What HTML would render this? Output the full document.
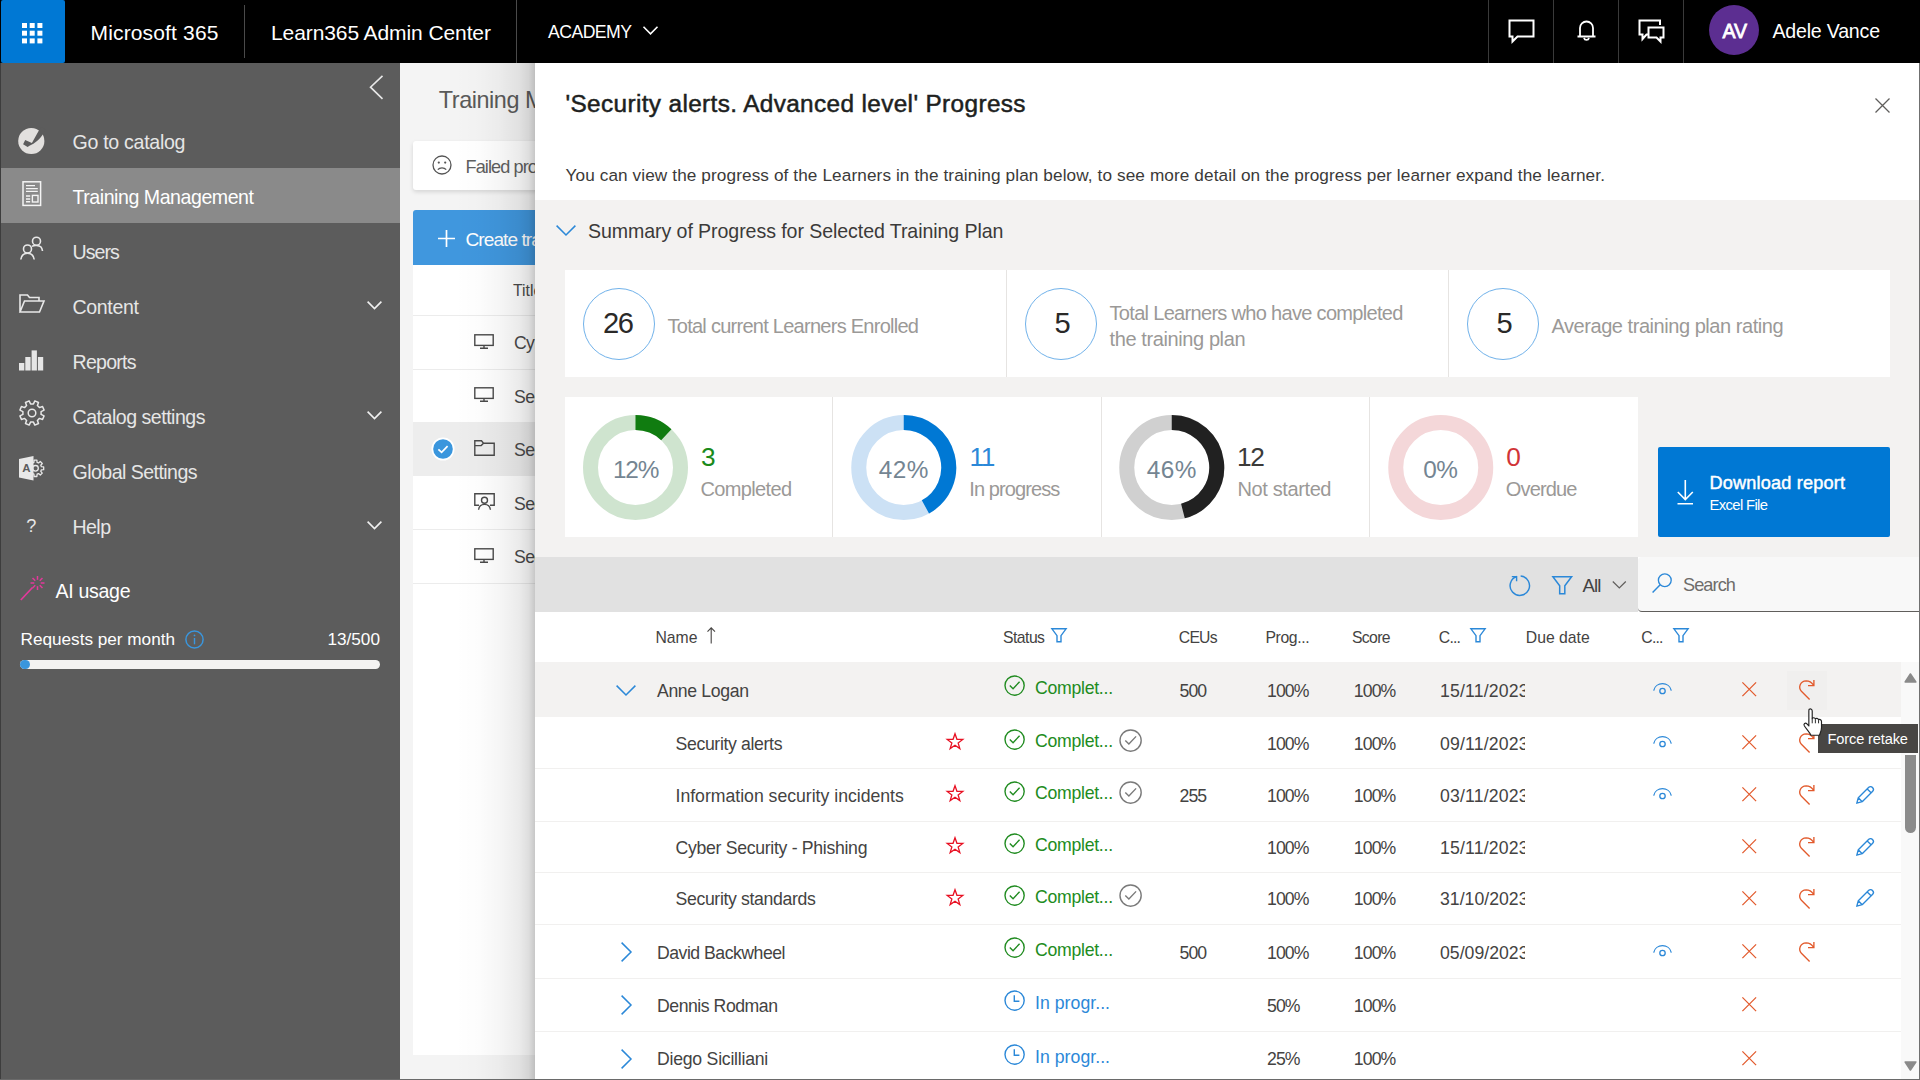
<!DOCTYPE html>
<html lang="en"><head><meta charset="utf-8"><title>Learn365 Admin Center</title>
<style>
*{box-sizing:border-box;margin:0;padding:0}
html,body{width:1920px;height:1080px;overflow:hidden;background:#f4f4f4;font-family:"Liberation Sans",sans-serif;}
.a{position:absolute}
.t{position:absolute;white-space:nowrap;line-height:1;}
svg{overflow:visible}
</style></head>
<body>
<div class="a" style="left:400px;top:63px;width:1520px;height:1017px;background:#f4f4f4;"></div>
<span class="t" style="top:88.54px;font-size:23.4px;color:#5a5a5a;left:438.80px;letter-spacing:-0.425px;">Training Management</span>
<div class="a" style="left:413px;top:141px;width:300px;height:49px;background:#fff;border-radius:3px;box-shadow:0 2px 4px rgba(0,0,0,0.13);"></div>
<svg class="a" style="left:432px;top:155px;" width="20" height="20" viewBox="0 0 20 20" fill="none"><circle cx="10" cy="10" r="9" stroke="#555" stroke-width="1.3"/><circle cx="6.8" cy="7.6" r="1.1" fill="#555"/><circle cx="13.2" cy="7.6" r="1.1" fill="#555"/><path d="M5.8 14.6 C7.8 12.2 12.2 12.2 14.2 14.6" stroke="#555" stroke-width="1.3"/></svg>
<span class="t" style="top:157.99px;font-size:18.14px;color:#5f5f5f;left:465.50px;letter-spacing:-0.907px;">Failed processes</span>
<div class="a" style="left:413px;top:262px;width:1200px;height:793px;background:#fff;"></div>
<div class="a" style="left:413px;top:210px;width:300px;height:54.6px;background:#4097de;border-radius:3px 3px 0 0;"></div>
<svg class="a" style="left:438px;top:230px;" width="17" height="17" viewBox="0 0 17 17" fill="none"><path d="M8.5 0 V17 M0 8.5 H17" stroke="#fff" stroke-width="1.7"/></svg>
<span class="t" style="top:230.18px;font-size:19.1px;color:#fff;left:465.50px;letter-spacing:-0.955px;">Create training</span>
<span class="t" style="top:282.51px;font-size:15.76px;color:#4a4a4a;left:513.00px;">Title</span>
<div class="a" style="left:413px;top:315px;width:1200px;height:1px;background:#ececec;"></div>
<div class="a" style="left:413px;top:369px;width:1200px;height:1px;background:#ececec;"></div>
<div class="a" style="left:413px;top:529px;width:1200px;height:1px;background:#ececec;"></div>
<div class="a" style="left:413px;top:583px;width:1200px;height:1px;background:#ececec;"></div>
<div class="a" style="left:413px;top:422px;width:1200px;height:54px;background:#ededed;"></div>
<span class="t" style="top:335.39px;font-size:17.67px;color:#4a4a4a;left:514.00px;letter-spacing:-0.664px;">Cyber Security</span>
<span class="t" style="top:388.89px;font-size:17.67px;color:#4a4a4a;left:514.00px;letter-spacing:-0.595px;">Security alerts</span>
<span class="t" style="top:442.39px;font-size:17.67px;color:#4a4a4a;left:514.00px;letter-spacing:-0.597px;">Security alerts. Advanced level</span>
<span class="t" style="top:495.89px;font-size:17.67px;color:#4a4a4a;left:514.00px;letter-spacing:-0.631px;">Security basics</span>
<span class="t" style="top:549.39px;font-size:17.67px;color:#4a4a4a;left:514.00px;letter-spacing:-0.640px;">Security standards</span>
<svg class="a" style="left:473.7px;top:333.5px;" width="20" height="15" viewBox="0 0 20 15" fill="none"><rect x="0.8" y="0.8" width="18.4" height="10.6" stroke="#4a4a4a" stroke-width="1.4"/><path d="M10 11.5 V14 M6 14.2 H14" stroke="#4a4a4a" stroke-width="1.4"/></svg>
<svg class="a" style="left:473.7px;top:387px;" width="20" height="15" viewBox="0 0 20 15" fill="none"><rect x="0.8" y="0.8" width="18.4" height="10.6" stroke="#4a4a4a" stroke-width="1.4"/><path d="M10 11.5 V14 M6 14.2 H14" stroke="#4a4a4a" stroke-width="1.4"/></svg>
<svg class="a" style="left:473.7px;top:547.5px;" width="20" height="15" viewBox="0 0 20 15" fill="none"><rect x="0.8" y="0.8" width="18.4" height="10.6" stroke="#4a4a4a" stroke-width="1.4"/><path d="M10 11.5 V14 M6 14.2 H14" stroke="#4a4a4a" stroke-width="1.4"/></svg>
<svg class="a" style="left:473.7px;top:440px;" width="21" height="16" viewBox="0 0 21 16" fill="none"><path d="M0.8 15.2 V0.8 H7.5 L9.5 3.2 H20.2 V15.2 Z M0.8 5.6 H7.2 L9.5 3.2" stroke="#4a4a4a" stroke-width="1.4" stroke-linejoin="miter"/></svg>
<svg class="a" style="left:473.7px;top:493px;" width="21" height="17" viewBox="0 0 21 17" fill="none"><path d="M5 12.2 H0.8 V0.8 H20.2 V12.2 H16" stroke="#4a4a4a" stroke-width="1.4"/><circle cx="10.5" cy="7.2" r="3" stroke="#4a4a4a" stroke-width="1.4"/><path d="M4.6 16.8 C5 12.6 7.8 11.4 10.5 11.4 C13.2 11.4 16 12.6 16.4 16.8" stroke="#4a4a4a" stroke-width="1.4"/></svg>
<svg class="a" style="left:431px;top:437px;" width="24" height="24" viewBox="0 0 24 24" fill="none"><circle cx="12" cy="12" r="11.5" fill="#fff"/><circle cx="12" cy="12" r="9.8" fill="#3a96dd"/><path d="M7.4 12.4 L10.6 15.4 L16.6 9.2" stroke="#fff" stroke-width="1.7"/></svg>
<div class="a" style="left:455px;top:63px;width:80px;height:1017px;background:linear-gradient(to right,rgba(0,0,0,0) 0%,rgba(0,0,0,0.012) 30%,rgba(0,0,0,0.035) 55%,rgba(0,0,0,0.08) 80%,rgba(0,0,0,0.13) 92%,rgba(0,0,0,0.22) 100%);"></div>
<div class="a" style="left:0px;top:63px;width:400px;height:1017px;background:#5c5c5c;"></div>
<div class="a" style="left:0px;top:63px;width:1px;height:1017px;background:#3d3d3d;"></div>
<svg class="a" style="left:369px;top:75px;" width="15" height="25" viewBox="0 0 15 25" fill="none"><path d="M13.5 0.8 L1.5 12.2 L13.5 23.8" stroke="#e8e8e8" stroke-width="1.6"/></svg>
<div class="a" style="left:1px;top:168px;width:399px;height:55px;background:#8a8a8a;"></div>
<span class="t" style="top:133.28px;font-size:19.58px;color:#e6e6e6;left:72.50px;letter-spacing:-0.292px;">Go to catalog</span>
<span class="t" style="top:188.28px;font-size:19.58px;color:#fff;left:72.50px;letter-spacing:-0.457px;">Training Management</span>
<span class="t" style="top:243.28px;font-size:19.58px;color:#e6e6e6;left:72.50px;letter-spacing:-0.979px;">Users</span>
<span class="t" style="top:298.28px;font-size:19.58px;color:#e6e6e6;left:72.50px;letter-spacing:-0.355px;">Content</span>
<span class="t" style="top:353.28px;font-size:19.58px;color:#e6e6e6;left:72.50px;letter-spacing:-0.755px;">Reports</span>
<span class="t" style="top:408.28px;font-size:19.58px;color:#e6e6e6;left:72.50px;letter-spacing:-0.492px;">Catalog settings</span>
<span class="t" style="top:463.28px;font-size:19.58px;color:#e6e6e6;left:72.50px;letter-spacing:-0.553px;">Global Settings</span>
<span class="t" style="top:518.28px;font-size:19.58px;color:#e6e6e6;left:72.50px;letter-spacing:-0.577px;">Help</span>
<svg class="a" style="left:367px;top:301.0px;" width="15" height="9" viewBox="0 0 15 9" fill="none"><path d="M0.6 0.6 L7.5 7.6 L14.4 0.6" stroke="#f0f0f0" stroke-width="1.6"/></svg>
<svg class="a" style="left:367px;top:411.0px;" width="15" height="9" viewBox="0 0 15 9" fill="none"><path d="M0.6 0.6 L7.5 7.6 L14.4 0.6" stroke="#f0f0f0" stroke-width="1.6"/></svg>
<svg class="a" style="left:367px;top:521.0px;" width="15" height="9" viewBox="0 0 15 9" fill="none"><path d="M0.6 0.6 L7.5 7.6 L14.4 0.6" stroke="#f0f0f0" stroke-width="1.6"/></svg>
<svg class="a" style="left:18px;top:128px;" width="27" height="27" viewBox="0 0 27 27" fill="none"><circle cx="13.3" cy="13" r="13.1" fill="#e2e0de"/><path d="M7.2 12 L5.1 16.3 L9.6 18.9 C14.5 16.3 20.5 13.5 24.6 6.8 L28 2 L22.8 -1 L13.9 15 Z" fill="#5c5c5c"/></svg>
<svg class="a" style="left:21.5px;top:181px;" width="20" height="25" viewBox="0 0 20 25" fill="none"><rect x="1" y="0.8" width="17.6" height="23.6" stroke="#f4f4f4" stroke-width="1.5"/><path d="M4 4.6 H13 M4 7.6 H15.8 M4 10.4 H15.8 M4 15 H8.2 M4 18 H8.2 M4 20.8 H8.2" stroke="#f4f4f4" stroke-width="1.4"/><rect x="10.4" y="14.4" width="5.6" height="6.6" stroke="#f4f4f4" stroke-width="1.4"/></svg>
<svg class="a" style="left:20px;top:236px;" width="23" height="24" viewBox="0 0 23 24" fill="none"><circle cx="16.5" cy="5.2" r="4" stroke="#e8e8e8" stroke-width="1.6"/><circle cx="7.5" cy="13" r="4" stroke="#e8e8e8" stroke-width="1.6"/><path d="M0.8 23.5 C1.5 18.5 4 17.2 7.5 17.2 C11 17.2 13.5 18.5 14.2 23.5" stroke="#e8e8e8" stroke-width="1.6"/><path d="M12 10.2 C14 9.2 19 9 21 11 C22 12.2 22.3 13.5 22.5 15" stroke="#e8e8e8" stroke-width="1.6"/></svg>
<svg class="a" style="left:18.5px;top:294px;" width="26" height="19" viewBox="0 0 26 19" fill="none"><path d="M1 18 V1 H8.5 L10.5 3.5 H20 V7 M1 18 L5.5 7 H25 L20.5 18 Z" stroke="#e8e8e8" stroke-width="1.6" stroke-linejoin="miter"/></svg>
<svg class="a" style="left:18.6px;top:350px;" width="25" height="21" viewBox="0 0 25 21" fill="none"><rect x="0" y="13" width="5.3" height="7.5" fill="#e6e6e6"/><rect x="6.3" y="7" width="5.3" height="13.5" fill="#e6e6e6"/><rect x="12.6" y="0.4" width="5.3" height="20.1" fill="#e6e6e6"/><rect x="18.9" y="7" width="5.3" height="13.5" fill="#e6e6e6"/></svg>
<svg class="a" style="left:18.5px;top:400.2px;" width="26" height="26" viewBox="0 0 26 26" fill="none"><path d="M15.86 0.93 L19.51 2.45 L18.40 5.55 L20.44 7.59 L23.55 6.49 L25.07 10.14 L22.09 11.56 L22.09 14.44 L25.07 15.86 L23.55 19.51 L20.45 18.40 L18.41 20.44 L19.51 23.55 L15.86 25.07 L14.44 22.09 L11.56 22.09 L10.14 25.07 L6.49 23.55 L7.60 20.45 L5.56 18.41 L2.45 19.51 L0.93 15.86 L3.91 14.44 L3.91 11.56 L0.93 10.14 L2.45 6.49 L5.55 7.60 L7.59 5.56 L6.49 2.45 L10.14 0.93 L11.56 3.91 L14.44 3.91 Z" stroke="#e8e8e8" stroke-width="1.5" stroke-linejoin="round"/><circle cx="13" cy="13" r="3.8" stroke="#e8e8e8" stroke-width="1.5"/></svg>
<svg class="a" style="left:19px;top:456px;" width="26" height="25" viewBox="0 0 26 25" fill="none"><path d="M15.10 4.12 L17.90 4.12 L18.07 6.41 L19.53 7.01 L21.29 5.52 L23.28 7.51 L21.78 9.24 L22.39 10.70 L24.68 10.90 L24.68 13.70 L22.39 13.87 L21.79 15.33 L23.28 17.09 L21.29 19.08 L19.56 17.58 L18.10 18.19 L17.90 20.48 L15.10 20.48 L14.93 18.19 L13.47 17.59 L11.71 19.08 L9.72 17.09 L11.22 15.36 L10.61 13.90 L8.32 13.70 L8.32 10.90 L10.61 10.73 L11.21 9.27 L9.72 7.51 L11.71 5.52 L13.44 7.02 L14.90 6.41 Z" stroke="#e8e8e8" stroke-width="1.3" stroke-linejoin="round"/><circle cx="16.5" cy="12.3" r="2.8" stroke="#e8e8e8" stroke-width="1.3"/><path d="M0 3 L14.5 0 V24.5 L0 21.5 Z" fill="#e8e8e8"/><text x="3.2" y="16.3" font-family="Liberation Sans, sans-serif" font-weight="bold" font-size="11.5" fill="#5c5c5c">A</text></svg>
<span class="t" style="top:517.49px;font-size:18.14px;color:#e8e8e8;left:26.20px;">?</span>
<svg class="a" style="left:20px;top:576px;" width="26" height="25" viewBox="0 0 26 25" fill="none"><path d="M0.8 24 L12.5 11.5" stroke="#e3399b" stroke-width="1.7"/><path d="M20.70 7.00 L24.50 7.00" stroke="#e3399b" stroke-width="1.5"/><path d="M19.76 9.26 L22.45 11.95" stroke="#e3399b" stroke-width="1.5"/><path d="M17.50 10.20 L17.50 14.00" stroke="#e3399b" stroke-width="1.5"/><path d="M15.24 9.26 L12.55 11.95" stroke="#e3399b" stroke-width="1.5"/><path d="M14.30 7.00 L10.50 7.00" stroke="#e3399b" stroke-width="1.5"/><path d="M15.24 4.74 L12.55 2.05" stroke="#e3399b" stroke-width="1.5"/><path d="M17.50 3.80 L17.50 0.00" stroke="#e3399b" stroke-width="1.5"/><path d="M19.76 4.74 L22.45 2.05" stroke="#e3399b" stroke-width="1.5"/></svg>
<span class="t" style="top:582.28px;font-size:19.58px;color:#fff;left:55.50px;letter-spacing:-0.319px;">AI usage</span>
<span class="t" style="top:631.30px;font-size:17.19px;color:#fff;left:20.50px;letter-spacing:-0.016px;">Requests per month</span>
<svg class="a" style="left:185px;top:630px;" width="19" height="19" viewBox="0 0 19 19" fill="none"><circle cx="9.5" cy="9.5" r="8.6" stroke="#3a96dd" stroke-width="1.5"/><path d="M9.5 8 V14.3" stroke="#3a96dd" stroke-width="1.4"/><circle cx="9.5" cy="5.4" r="0.9" fill="#3a96dd"/></svg>
<span class="t" style="top:631.30px;font-size:17.19px;color:#fff;left:327.50px;letter-spacing:-0.020px;">13/500</span>
<div class="a" style="left:20px;top:660px;width:360px;height:9px;background:#f3f2f1;border-radius:5px;"></div>
<div class="a" style="left:20px;top:660px;width:9.5px;height:9px;background:#3a96dd;border-radius:5px;"></div>
<div class="a" style="left:535px;top:63px;width:1385px;height:1017px;background:#fff;"></div>
<span class="t" style="top:92.04px;font-size:24.35px;color:#201f1e;left:565.50px;-webkit-text-stroke:0.5px #201f1e;letter-spacing:0.366px;">'Security alerts. Advanced level' Progress</span>
<svg class="a" style="left:1875px;top:98px;" width="15" height="15" viewBox="0 0 15 15" fill="none"><path d="M0.5 0.5 L14.5 14.5 M14.5 0.5 L0.5 14.5" stroke="#605e5c" stroke-width="1.3"/></svg>
<span class="t" style="top:167.10px;font-size:17.19px;color:#3b3a39;left:565.50px;letter-spacing:0.103px;">You can view the progress of the Learners in the training plan below, to see more detail on the progress per learner expand the learner.</span>
<div class="a" style="left:535px;top:200px;width:1385px;height:357px;background:#f3f2f1;"></div>
<svg class="a" style="left:555.5px;top:225px;" width="20" height="11" viewBox="0 0 20 11" fill="none"><path d="M0.6 0.6 L10 10 L19.4 0.6" stroke="#2b88d8" stroke-width="1.5"/></svg>
<span class="t" style="top:222.28px;font-size:19.58px;color:#3b3a39;left:588.00px;letter-spacing:-0.077px;">Summary of Progress for Selected Training Plan</span>
<div class="a" style="left:565px;top:270px;width:1325px;height:107px;background:#fff;"></div>
<div class="a" style="left:1006px;top:270px;width:1px;height:107px;background:#e6e4e2;"></div>
<div class="a" style="left:1448px;top:270px;width:1px;height:107px;background:#e6e4e2;"></div>
<div class="a" style="left:583px;top:288px;width:72px;height:72px;border:1.3px solid #71b2ea;border-radius:50%;"></div>
<span class="t" style="top:308.69px;font-size:29.13px;color:#2a2928;left:603.00px;letter-spacing:-1.457px;">26</span>
<div class="a" style="left:1025px;top:288px;width:72px;height:72px;border:1.3px solid #71b2ea;border-radius:50%;"></div>
<span class="t" style="top:308.69px;font-size:29.13px;color:#2a2928;left:1054.50px;">5</span>
<div class="a" style="left:1467px;top:288px;width:72px;height:72px;border:1.3px solid #71b2ea;border-radius:50%;"></div>
<span class="t" style="top:308.69px;font-size:29.13px;color:#2a2928;left:1496.50px;">5</span>
<span class="t" style="top:316.38px;font-size:20.05px;color:#9b9997;left:667.50px;letter-spacing:-0.747px;">Total current Learners Enrolled</span>
<span class="t" style="top:303.18px;font-size:20.05px;color:#9b9997;left:1109.50px;letter-spacing:-0.697px;">Total Learners who have completed</span>
<span class="t" style="top:329.18px;font-size:20.05px;color:#9b9997;left:1109.50px;letter-spacing:-0.407px;">the training plan</span>
<span class="t" style="top:316.38px;font-size:20.05px;color:#9b9997;left:1551.50px;letter-spacing:-0.466px;">Average training plan rating</span>
<div class="a" style="left:565px;top:397px;width:1073px;height:140px;background:#fff;"></div>
<div class="a" style="left:832px;top:397px;width:1px;height:140px;background:#e6e4e2;"></div>
<div class="a" style="left:1101px;top:397px;width:1px;height:140px;background:#e6e4e2;"></div>
<div class="a" style="left:1369px;top:397px;width:1px;height:140px;background:#e6e4e2;"></div>
<svg class="a" style="left:0;top:0" width="1920" height="1080" fill="none"><circle cx="635.5" cy="467.5" r="45" stroke="#cfe4cf" stroke-width="15"/><path d="M635.5 422.5 A45 45 0 0 1 666.30 434.70" stroke="#107c10" stroke-width="15"/></svg>
<span class="t" style="top:457.84px;font-size:24.35px;color:#748592;left:613.00px;letter-spacing:-1.218px;">12%</span>
<span class="t" style="top:444.12px;font-size:26.26px;color:#1a8a1a;left:701.00px;">3</span>
<span class="t" style="top:478.88px;font-size:20.05px;color:#9b9997;left:700.50px;letter-spacing:-0.669px;">Completed</span>
<svg class="a" style="left:0;top:0" width="1920" height="1080" fill="none"><circle cx="903.75" cy="467.5" r="45" stroke="#cce1f5" stroke-width="15"/><path d="M903.75 422.5 A45 45 0 0 1 925.43 506.93" stroke="#0078d4" stroke-width="15"/></svg>
<span class="t" style="top:457.84px;font-size:24.35px;color:#748592;left:878.75px;letter-spacing:0.401px;">42%</span>
<span class="t" style="top:444.12px;font-size:26.26px;color:#2b88d8;left:969.50px;letter-spacing:-1.313px;">11</span>
<span class="t" style="top:478.88px;font-size:20.05px;color:#9b9997;left:969.30px;letter-spacing:-0.927px;">In progress</span>
<svg class="a" style="left:0;top:0" width="1920" height="1080" fill="none"><circle cx="1171.75" cy="467.5" r="45" stroke="#d0d0d0" stroke-width="15"/><path d="M1171.75 422.5 A45 45 0 0 1 1182.94 511.09" stroke="#212121" stroke-width="15"/></svg>
<span class="t" style="top:457.84px;font-size:24.35px;color:#748592;left:1146.75px;letter-spacing:0.401px;">46%</span>
<span class="t" style="top:444.12px;font-size:26.26px;color:#3b3a39;left:1237.00px;letter-spacing:-1.313px;">12</span>
<span class="t" style="top:478.88px;font-size:20.05px;color:#9b9997;left:1237.50px;letter-spacing:-0.396px;">Not started</span>
<svg class="a" style="left:0;top:0" width="1920" height="1080" fill="none"><circle cx="1440.75" cy="467.5" r="45" stroke="#f4d7d9" stroke-width="15"/></svg>
<span class="t" style="top:457.84px;font-size:24.35px;color:#748592;left:1423.25px;letter-spacing:-0.480px;">0%</span>
<span class="t" style="top:444.12px;font-size:26.26px;color:#d13438;left:1506.30px;">0</span>
<span class="t" style="top:478.88px;font-size:20.05px;color:#9b9997;left:1505.80px;letter-spacing:-0.855px;">Overdue</span>
<div class="a" style="left:1658px;top:447px;width:232px;height:90px;background:#0078d4;border-radius:2px;"></div>
<svg class="a" style="left:1677px;top:480px;" width="17" height="25" viewBox="0 0 17 25" fill="none"><path d="M8.3 0 V19.5 M0.8 12 L8.3 19.5 L15.8 12 M0.5 23.8 H16" stroke="#fff" stroke-width="1.6"/></svg>
<span class="t" style="top:474.29px;font-size:18.14px;color:#fff;left:1709.50px;-webkit-text-stroke:0.45px #fff;letter-spacing:0.176px;">Download report</span>
<span class="t" style="top:498.32px;font-size:14.8px;color:#fff;left:1709.50px;letter-spacing:-0.627px;">Excel File</span>
<div class="a" style="left:535px;top:557px;width:1103px;height:54.5px;background:#e1e1e1;"></div>
<div class="a" style="left:1638px;top:557px;width:281px;height:54.5px;background:#f8f8f8;border-bottom:1.3px solid #605e5c;border-radius:4px 0 0 4px;"></div>
<svg class="a" style="left:1509px;top:574.5px;" width="21" height="21" viewBox="0 0 21 21" fill="none"><path d="M11.65 1.04 A9.7 9.7 0 1 1 7.64 1.53" stroke="#2b88d8" stroke-width="1.45"/><path d="M2.8 1.6 H7.6 V6.2" stroke="#2b88d8" stroke-width="1.4"/></svg>
<svg class="a" style="left:1552px;top:576px;" width="20.5" height="18.5" viewBox="0 0 20.5 18.5" fill="none"><path d="M0.9 0.8 H19.60 L12.81 9.80 V17.80 H7.69 V9.80 Z" stroke="#2b88d8" stroke-width="1.5" stroke-linejoin="miter"/></svg>
<span class="t" style="top:576.89px;font-size:18.62px;color:#444342;left:1582.50px;letter-spacing:-0.931px;">All</span>
<svg class="a" style="left:1611.8px;top:580.6px;" width="14.6" height="8" viewBox="0 0 14 8" fill="none"><path d="M0.5 0.5 L7 7 L13.5 0.5" stroke="#605e5c" stroke-width="1.2"/></svg>
<svg class="a" style="left:1652.3px;top:573.4px;" width="20" height="20" viewBox="0 0 20 20" fill="none"><circle cx="12.8" cy="7.2" r="6.4" stroke="#2b88d8" stroke-width="1.35"/><path d="M8.2 11.8 L0.6 19.4" stroke="#2b88d8" stroke-width="1.45"/></svg>
<span class="t" style="top:576.49px;font-size:18.14px;color:#6e6c6a;left:1683.00px;letter-spacing:-0.907px;">Search</span>
<div class="a" style="left:535px;top:611.5px;width:1385px;height:51px;background:#fff;"></div>
<span class="t" style="top:629.71px;font-size:15.76px;color:#444342;left:655.50px;letter-spacing:-0.018px;">Name</span>
<svg class="a" style="left:707px;top:627px;" width="8.5" height="16.5" viewBox="0 0 8.5 16.5" fill="none"><path d="M4.2 0.8 V16.5 M0.5 4.6 L4.2 0.8 L8 4.6" stroke="#484644" stroke-width="1.1"/></svg>
<span class="t" style="top:629.71px;font-size:15.76px;color:#444342;left:1003.00px;letter-spacing:-0.531px;">Status</span>
<svg class="a" style="left:1051.3px;top:628px;" width="16" height="14.5" viewBox="0 0 16 14.5" fill="none"><path d="M0.9 0.8 H15.10 L10.00 7.69 V13.80 H6.00 V7.69 Z" stroke="#2b88d8" stroke-width="1.4" stroke-linejoin="miter"/></svg>
<span class="t" style="top:629.71px;font-size:15.76px;color:#444342;left:1178.80px;letter-spacing:-0.788px;">CEUs</span>
<span class="t" style="top:629.71px;font-size:15.76px;color:#444342;left:1265.50px;letter-spacing:-0.399px;">Prog...</span>
<span class="t" style="top:629.71px;font-size:15.76px;color:#444342;left:1352.00px;letter-spacing:-0.655px;">Score</span>
<span class="t" style="top:629.71px;font-size:15.76px;color:#444342;left:1438.80px;letter-spacing:-0.788px;">C...</span>
<svg class="a" style="left:1470px;top:628px;" width="16" height="14.5" viewBox="0 0 16 14.5" fill="none"><path d="M0.9 0.8 H15.10 L10.00 7.69 V13.80 H6.00 V7.69 Z" stroke="#2b88d8" stroke-width="1.4" stroke-linejoin="miter"/></svg>
<span class="t" style="top:629.71px;font-size:15.76px;color:#444342;left:1525.80px;letter-spacing:0.006px;">Due date</span>
<span class="t" style="top:629.71px;font-size:15.76px;color:#444342;left:1641.30px;letter-spacing:-0.788px;">C...</span>
<svg class="a" style="left:1673px;top:628px;" width="16" height="14.5" viewBox="0 0 16 14.5" fill="none"><path d="M0.9 0.8 H15.10 L10.00 7.69 V13.80 H6.00 V7.69 Z" stroke="#2b88d8" stroke-width="1.4" stroke-linejoin="miter"/></svg>
<div class="a" style="left:535px;top:662px;width:1366px;height:55px;background:#f3f2f1;"></div>
<svg class="a" style="left:616px;top:685px;" width="20" height="11" viewBox="0 0 20 11" fill="none"><path d="M0.6 0.6 L10 10 L19.4 0.6" stroke="#2b88d8" stroke-width="1.5"/></svg>
<span class="t" style="top:682.69px;font-size:17.67px;color:#444342;left:657.00px;letter-spacing:-0.363px;">Anne Logan</span>
<svg class="a" style="left:1004.0px;top:675.1999999999999px;" width="21.2" height="21.2" viewBox="0 0 21.2 21.2" fill="none"><circle cx="10.6" cy="10.6" r="9.6" stroke="#218c21" stroke-width="1.4"/><path d="M5.80 10.41 L9.06 13.67 L15.59 6.76" stroke="#218c21" stroke-width="1.4"/></svg>
<span class="t" style="top:680.29px;font-size:17.67px;color:#218c21;left:1035.00px;letter-spacing:-0.270px;">Complet...</span>
<span class="t" style="top:682.69px;font-size:17.67px;color:#444342;left:1179.50px;letter-spacing:-0.884px;">500</span>
<span class="t" style="top:682.69px;font-size:17.67px;color:#444342;left:1267.00px;letter-spacing:-0.884px;">100%</span>
<span class="t" style="top:682.69px;font-size:17.67px;color:#444342;left:1353.80px;letter-spacing:-0.884px;">100%</span>
<div class="a" style="left:1438px;top:662.0px;width:87.3px;height:53.0px;overflow:hidden"><span class="t" style="top:20.69px;font-size:17.67px;color:#444342;left:2.00px;letter-spacing:0.161px;">15/11/2023</span></div>
<div class="a" style="left:1787px;top:671px;width:40px;height:38.5px;background:#f0efee;"></div>
<svg class="a" style="left:1653.0px;top:683.1px;" width="19" height="12" viewBox="0 0 19 12" fill="none"><path d="M0.7 7.6 C2.6 -1.6 16.4 -1.6 18.3 7.6" stroke="#2b88d8" stroke-width="1.3"/><circle cx="9.5" cy="8" r="2.7" stroke="#2b88d8" stroke-width="1.3"/></svg>
<svg class="a" style="left:1741.75px;top:682.25px;" width="14.5" height="14.5" viewBox="0 0 14.5 14.5" fill="none"><path d="M0.4 0.4 L14.1 14.1 M14.1 0.4 L0.4 14.1" stroke="#e25a2c" stroke-width="1.25"/></svg>
<svg class="a" style="left:1798.5px;top:680.0px;" width="17" height="20" viewBox="0 0 17 20" fill="none"><path d="M10.6 19.4 L2.4 11.2 C-1 7.6 1 1.1 7.2 0.9 C10.2 0.9 12.8 2.6 14.4 5 M14.9 0 V5.6 H9" stroke="#e25a2c" stroke-width="1.35" stroke-linejoin="miter"/></svg>
<div class="a" style="left:535px;top:717px;width:1366px;height:52px;background:#fff;"></div>
<div class="a" style="left:535px;top:768px;width:1366px;height:1px;background:#f1f0ef;"></div>
<span class="t" style="top:735.89px;font-size:17.67px;color:#444342;left:675.50px;letter-spacing:-0.347px;">Security alerts</span>
<svg class="a" style="left:945.6px;top:733.4px;" width="18" height="18" viewBox="0 0 18 18" fill="none"><path d="M9.00 0.80 L10.94 6.33 L16.80 6.47 L12.14 10.02 L13.82 15.63 L9.00 12.30 L4.18 15.63 L5.86 10.02 L1.20 6.47 L7.06 6.33 Z" stroke="#e81123" stroke-width="1.3" stroke-linejoin="miter"/></svg>
<svg class="a" style="left:1004.0px;top:729.4px;" width="21.2" height="21.2" viewBox="0 0 21.2 21.2" fill="none"><circle cx="10.6" cy="10.6" r="9.6" stroke="#218c21" stroke-width="1.4"/><path d="M5.80 10.41 L9.06 13.67 L15.59 6.76" stroke="#218c21" stroke-width="1.4"/></svg>
<span class="t" style="top:733.49px;font-size:17.67px;color:#218c21;left:1035.00px;letter-spacing:-0.270px;">Complet...</span>
<svg class="a" style="left:1119.0px;top:728.9px;" width="23.2" height="23.2" viewBox="0 0 23.2 23.2" fill="none"><circle cx="11.6" cy="11.6" r="10.6" stroke="#7a7a7a" stroke-width="1.4"/><path d="M6.30 11.39 L9.90 14.99 L17.11 7.36" stroke="#7a7a7a" stroke-width="1.4"/></svg>
<span class="t" style="top:735.89px;font-size:17.67px;color:#444342;left:1267.00px;letter-spacing:-0.884px;">100%</span>
<span class="t" style="top:735.89px;font-size:17.67px;color:#444342;left:1353.80px;letter-spacing:-0.884px;">100%</span>
<div class="a" style="left:1438px;top:717.0px;width:87.3px;height:50.0px;overflow:hidden"><span class="t" style="top:18.89px;font-size:17.67px;color:#444342;left:2.00px;letter-spacing:0.161px;">09/11/2023</span></div>
<svg class="a" style="left:1653.0px;top:736.3000000000001px;" width="19" height="12" viewBox="0 0 19 12" fill="none"><path d="M0.7 7.6 C2.6 -1.6 16.4 -1.6 18.3 7.6" stroke="#2b88d8" stroke-width="1.3"/><circle cx="9.5" cy="8" r="2.7" stroke="#2b88d8" stroke-width="1.3"/></svg>
<svg class="a" style="left:1741.75px;top:735.45px;" width="14.5" height="14.5" viewBox="0 0 14.5 14.5" fill="none"><path d="M0.4 0.4 L14.1 14.1 M14.1 0.4 L0.4 14.1" stroke="#e25a2c" stroke-width="1.25"/></svg>
<svg class="a" style="left:1798.5px;top:733.2px;" width="17" height="20" viewBox="0 0 17 20" fill="none"><path d="M10.6 19.4 L2.4 11.2 C-1 7.6 1 1.1 7.2 0.9 C10.2 0.9 12.8 2.6 14.4 5 M14.9 0 V5.6 H9" stroke="#e25a2c" stroke-width="1.35" stroke-linejoin="miter"/></svg>
<div class="a" style="left:535px;top:769px;width:1366px;height:53px;background:#fff;"></div>
<div class="a" style="left:535px;top:821px;width:1366px;height:1px;background:#f1f0ef;"></div>
<span class="t" style="top:787.89px;font-size:17.67px;color:#444342;left:675.50px;letter-spacing:-0.012px;">Information security incidents</span>
<svg class="a" style="left:945.6px;top:785.4px;" width="18" height="18" viewBox="0 0 18 18" fill="none"><path d="M9.00 0.80 L10.94 6.33 L16.80 6.47 L12.14 10.02 L13.82 15.63 L9.00 12.30 L4.18 15.63 L5.86 10.02 L1.20 6.47 L7.06 6.33 Z" stroke="#e81123" stroke-width="1.3" stroke-linejoin="miter"/></svg>
<svg class="a" style="left:1004.0px;top:781.4px;" width="21.2" height="21.2" viewBox="0 0 21.2 21.2" fill="none"><circle cx="10.6" cy="10.6" r="9.6" stroke="#218c21" stroke-width="1.4"/><path d="M5.80 10.41 L9.06 13.67 L15.59 6.76" stroke="#218c21" stroke-width="1.4"/></svg>
<span class="t" style="top:785.49px;font-size:17.67px;color:#218c21;left:1035.00px;letter-spacing:-0.270px;">Complet...</span>
<svg class="a" style="left:1119.0px;top:780.9px;" width="23.2" height="23.2" viewBox="0 0 23.2 23.2" fill="none"><circle cx="11.6" cy="11.6" r="10.6" stroke="#7a7a7a" stroke-width="1.4"/><path d="M6.30 11.39 L9.90 14.99 L17.11 7.36" stroke="#7a7a7a" stroke-width="1.4"/></svg>
<span class="t" style="top:787.89px;font-size:17.67px;color:#444342;left:1179.50px;letter-spacing:-0.884px;">255</span>
<span class="t" style="top:787.89px;font-size:17.67px;color:#444342;left:1267.00px;letter-spacing:-0.884px;">100%</span>
<span class="t" style="top:787.89px;font-size:17.67px;color:#444342;left:1353.80px;letter-spacing:-0.884px;">100%</span>
<div class="a" style="left:1438px;top:769.0px;width:87.3px;height:51.0px;overflow:hidden"><span class="t" style="top:18.89px;font-size:17.67px;color:#444342;left:2.00px;letter-spacing:0.161px;">03/11/2023</span></div>
<svg class="a" style="left:1653.0px;top:788.3000000000001px;" width="19" height="12" viewBox="0 0 19 12" fill="none"><path d="M0.7 7.6 C2.6 -1.6 16.4 -1.6 18.3 7.6" stroke="#2b88d8" stroke-width="1.3"/><circle cx="9.5" cy="8" r="2.7" stroke="#2b88d8" stroke-width="1.3"/></svg>
<svg class="a" style="left:1741.75px;top:787.45px;" width="14.5" height="14.5" viewBox="0 0 14.5 14.5" fill="none"><path d="M0.4 0.4 L14.1 14.1 M14.1 0.4 L0.4 14.1" stroke="#e25a2c" stroke-width="1.25"/></svg>
<svg class="a" style="left:1798.5px;top:785.2px;" width="17" height="20" viewBox="0 0 17 20" fill="none"><path d="M10.6 19.4 L2.4 11.2 C-1 7.6 1 1.1 7.2 0.9 C10.2 0.9 12.8 2.6 14.4 5 M14.9 0 V5.6 H9" stroke="#e25a2c" stroke-width="1.35" stroke-linejoin="miter"/></svg>
<svg class="a" style="left:1856.3px;top:785.7px;" width="18" height="18" viewBox="0 0 18 18" fill="none"><path d="M0.8 17.2 L2.3 11.8 L12.8 1.3 C14 0.1 15.5 0.5 16.5 1.5 C17.5 2.5 17.9 4 16.7 5.2 L6.2 15.7 Z M2.3 11.8 L6.2 15.7 M11.2 2.9 L15.1 6.8" stroke="#2b88d8" stroke-width="1.35" stroke-linejoin="round"/></svg>
<div class="a" style="left:535px;top:822px;width:1366px;height:51px;background:#fff;"></div>
<div class="a" style="left:535px;top:872px;width:1366px;height:1px;background:#f1f0ef;"></div>
<span class="t" style="top:839.69px;font-size:17.67px;color:#444342;left:675.50px;letter-spacing:-0.302px;">Cyber Security - Phishing</span>
<svg class="a" style="left:945.6px;top:837.1999999999999px;" width="18" height="18" viewBox="0 0 18 18" fill="none"><path d="M9.00 0.80 L10.94 6.33 L16.80 6.47 L12.14 10.02 L13.82 15.63 L9.00 12.30 L4.18 15.63 L5.86 10.02 L1.20 6.47 L7.06 6.33 Z" stroke="#e81123" stroke-width="1.3" stroke-linejoin="miter"/></svg>
<svg class="a" style="left:1004.0px;top:833.1999999999999px;" width="21.2" height="21.2" viewBox="0 0 21.2 21.2" fill="none"><circle cx="10.6" cy="10.6" r="9.6" stroke="#218c21" stroke-width="1.4"/><path d="M5.80 10.41 L9.06 13.67 L15.59 6.76" stroke="#218c21" stroke-width="1.4"/></svg>
<span class="t" style="top:837.29px;font-size:17.67px;color:#218c21;left:1035.00px;letter-spacing:-0.270px;">Complet...</span>
<span class="t" style="top:839.69px;font-size:17.67px;color:#444342;left:1267.00px;letter-spacing:-0.884px;">100%</span>
<span class="t" style="top:839.69px;font-size:17.67px;color:#444342;left:1353.80px;letter-spacing:-0.884px;">100%</span>
<div class="a" style="left:1438px;top:822.0px;width:87.3px;height:49.0px;overflow:hidden"><span class="t" style="top:17.69px;font-size:17.67px;color:#444342;left:2.00px;letter-spacing:0.161px;">15/11/2023</span></div>
<svg class="a" style="left:1741.75px;top:839.25px;" width="14.5" height="14.5" viewBox="0 0 14.5 14.5" fill="none"><path d="M0.4 0.4 L14.1 14.1 M14.1 0.4 L0.4 14.1" stroke="#e25a2c" stroke-width="1.25"/></svg>
<svg class="a" style="left:1798.5px;top:837.0px;" width="17" height="20" viewBox="0 0 17 20" fill="none"><path d="M10.6 19.4 L2.4 11.2 C-1 7.6 1 1.1 7.2 0.9 C10.2 0.9 12.8 2.6 14.4 5 M14.9 0 V5.6 H9" stroke="#e25a2c" stroke-width="1.35" stroke-linejoin="miter"/></svg>
<svg class="a" style="left:1856.3px;top:837.5px;" width="18" height="18" viewBox="0 0 18 18" fill="none"><path d="M0.8 17.2 L2.3 11.8 L12.8 1.3 C14 0.1 15.5 0.5 16.5 1.5 C17.5 2.5 17.9 4 16.7 5.2 L6.2 15.7 Z M2.3 11.8 L6.2 15.7 M11.2 2.9 L15.1 6.8" stroke="#2b88d8" stroke-width="1.35" stroke-linejoin="round"/></svg>
<div class="a" style="left:535px;top:873px;width:1366px;height:52px;background:#fff;"></div>
<div class="a" style="left:535px;top:924px;width:1366px;height:1px;background:#f1f0ef;"></div>
<span class="t" style="top:891.39px;font-size:17.67px;color:#444342;left:675.50px;letter-spacing:-0.347px;">Security standards</span>
<svg class="a" style="left:945.6px;top:888.9px;" width="18" height="18" viewBox="0 0 18 18" fill="none"><path d="M9.00 0.80 L10.94 6.33 L16.80 6.47 L12.14 10.02 L13.82 15.63 L9.00 12.30 L4.18 15.63 L5.86 10.02 L1.20 6.47 L7.06 6.33 Z" stroke="#e81123" stroke-width="1.3" stroke-linejoin="miter"/></svg>
<svg class="a" style="left:1004.0px;top:884.9px;" width="21.2" height="21.2" viewBox="0 0 21.2 21.2" fill="none"><circle cx="10.6" cy="10.6" r="9.6" stroke="#218c21" stroke-width="1.4"/><path d="M5.80 10.41 L9.06 13.67 L15.59 6.76" stroke="#218c21" stroke-width="1.4"/></svg>
<span class="t" style="top:888.99px;font-size:17.67px;color:#218c21;left:1035.00px;letter-spacing:-0.270px;">Complet...</span>
<svg class="a" style="left:1119.0px;top:884.4px;" width="23.2" height="23.2" viewBox="0 0 23.2 23.2" fill="none"><circle cx="11.6" cy="11.6" r="10.6" stroke="#7a7a7a" stroke-width="1.4"/><path d="M6.30 11.39 L9.90 14.99 L17.11 7.36" stroke="#7a7a7a" stroke-width="1.4"/></svg>
<span class="t" style="top:891.39px;font-size:17.67px;color:#444342;left:1267.00px;letter-spacing:-0.884px;">100%</span>
<span class="t" style="top:891.39px;font-size:17.67px;color:#444342;left:1353.80px;letter-spacing:-0.884px;">100%</span>
<div class="a" style="left:1438px;top:873.0px;width:87.3px;height:50.0px;overflow:hidden"><span class="t" style="top:18.39px;font-size:17.67px;color:#444342;left:2.00px;letter-spacing:0.014px;">31/10/2023</span></div>
<svg class="a" style="left:1741.75px;top:890.95px;" width="14.5" height="14.5" viewBox="0 0 14.5 14.5" fill="none"><path d="M0.4 0.4 L14.1 14.1 M14.1 0.4 L0.4 14.1" stroke="#e25a2c" stroke-width="1.25"/></svg>
<svg class="a" style="left:1798.5px;top:888.7px;" width="17" height="20" viewBox="0 0 17 20" fill="none"><path d="M10.6 19.4 L2.4 11.2 C-1 7.6 1 1.1 7.2 0.9 C10.2 0.9 12.8 2.6 14.4 5 M14.9 0 V5.6 H9" stroke="#e25a2c" stroke-width="1.35" stroke-linejoin="miter"/></svg>
<svg class="a" style="left:1856.3px;top:889.2px;" width="18" height="18" viewBox="0 0 18 18" fill="none"><path d="M0.8 17.2 L2.3 11.8 L12.8 1.3 C14 0.1 15.5 0.5 16.5 1.5 C17.5 2.5 17.9 4 16.7 5.2 L6.2 15.7 Z M2.3 11.8 L6.2 15.7 M11.2 2.9 L15.1 6.8" stroke="#2b88d8" stroke-width="1.35" stroke-linejoin="round"/></svg>
<div class="a" style="left:535px;top:925px;width:1366px;height:54px;background:#fff;"></div>
<div class="a" style="left:535px;top:978px;width:1366px;height:1px;background:#f1f0ef;"></div>
<svg class="a" style="left:621px;top:942.1999999999999px;" width="11" height="20" viewBox="0 0 11 20" fill="none"><path d="M0.6 0.6 L10 10 L0.6 19.4" stroke="#2b88d8" stroke-width="1.5"/></svg>
<span class="t" style="top:944.69px;font-size:17.67px;color:#444342;left:657.00px;letter-spacing:-0.495px;">David Backwheel</span>
<svg class="a" style="left:1004.0px;top:937.1999999999999px;" width="21.2" height="21.2" viewBox="0 0 21.2 21.2" fill="none"><circle cx="10.6" cy="10.6" r="9.6" stroke="#218c21" stroke-width="1.4"/><path d="M5.80 10.41 L9.06 13.67 L15.59 6.76" stroke="#218c21" stroke-width="1.4"/></svg>
<span class="t" style="top:942.29px;font-size:17.67px;color:#218c21;left:1035.00px;letter-spacing:-0.270px;">Complet...</span>
<span class="t" style="top:944.69px;font-size:17.67px;color:#444342;left:1179.50px;letter-spacing:-0.884px;">500</span>
<span class="t" style="top:944.69px;font-size:17.67px;color:#444342;left:1267.00px;letter-spacing:-0.884px;">100%</span>
<span class="t" style="top:944.69px;font-size:17.67px;color:#444342;left:1353.80px;letter-spacing:-0.884px;">100%</span>
<div class="a" style="left:1438px;top:925.0px;width:87.3px;height:52.0px;overflow:hidden"><span class="t" style="top:19.69px;font-size:17.67px;color:#444342;left:2.00px;letter-spacing:0.014px;">05/09/2023</span></div>
<svg class="a" style="left:1653.0px;top:945.1px;" width="19" height="12" viewBox="0 0 19 12" fill="none"><path d="M0.7 7.6 C2.6 -1.6 16.4 -1.6 18.3 7.6" stroke="#2b88d8" stroke-width="1.3"/><circle cx="9.5" cy="8" r="2.7" stroke="#2b88d8" stroke-width="1.3"/></svg>
<svg class="a" style="left:1741.75px;top:944.25px;" width="14.5" height="14.5" viewBox="0 0 14.5 14.5" fill="none"><path d="M0.4 0.4 L14.1 14.1 M14.1 0.4 L0.4 14.1" stroke="#e25a2c" stroke-width="1.25"/></svg>
<svg class="a" style="left:1798.5px;top:942.0px;" width="17" height="20" viewBox="0 0 17 20" fill="none"><path d="M10.6 19.4 L2.4 11.2 C-1 7.6 1 1.1 7.2 0.9 C10.2 0.9 12.8 2.6 14.4 5 M14.9 0 V5.6 H9" stroke="#e25a2c" stroke-width="1.35" stroke-linejoin="miter"/></svg>
<div class="a" style="left:535px;top:979px;width:1366px;height:53px;background:#fff;"></div>
<div class="a" style="left:535px;top:1031px;width:1366px;height:1px;background:#f1f0ef;"></div>
<svg class="a" style="left:621px;top:995.1999999999999px;" width="11" height="20" viewBox="0 0 11 20" fill="none"><path d="M0.6 0.6 L10 10 L0.6 19.4" stroke="#2b88d8" stroke-width="1.5"/></svg>
<span class="t" style="top:997.69px;font-size:17.67px;color:#444342;left:657.00px;letter-spacing:-0.467px;">Dennis Rodman</span>
<svg class="a" style="left:1004.0px;top:990.1999999999999px;" width="21.2" height="21.2" viewBox="0 0 21.2 21.2" fill="none"><circle cx="10.6" cy="10.6" r="9.6" stroke="#2b88d8" stroke-width="1.4"/><path d="M10.30 5.32 V11.20 H15.40" stroke="#2b88d8" stroke-width="1.4"/></svg>
<span class="t" style="top:995.29px;font-size:17.67px;color:#2b88d8;left:1035.00px;letter-spacing:0.040px;">In progr...</span>
<span class="t" style="top:997.69px;font-size:17.67px;color:#444342;left:1267.00px;letter-spacing:-0.884px;">50%</span>
<span class="t" style="top:997.69px;font-size:17.67px;color:#444342;left:1353.80px;letter-spacing:-0.884px;">100%</span>
<svg class="a" style="left:1741.75px;top:997.25px;" width="14.5" height="14.5" viewBox="0 0 14.5 14.5" fill="none"><path d="M0.4 0.4 L14.1 14.1 M14.1 0.4 L0.4 14.1" stroke="#e25a2c" stroke-width="1.25"/></svg>
<div class="a" style="left:535px;top:1032px;width:1366px;height:54px;background:#fff;"></div>
<div class="a" style="left:535px;top:1085px;width:1366px;height:1px;background:#f1f0ef;"></div>
<svg class="a" style="left:621px;top:1048.9px;" width="11" height="20" viewBox="0 0 11 20" fill="none"><path d="M0.6 0.6 L10 10 L0.6 19.4" stroke="#2b88d8" stroke-width="1.5"/></svg>
<span class="t" style="top:1051.39px;font-size:17.67px;color:#444342;left:657.00px;letter-spacing:-0.237px;">Diego Sicilliani</span>
<svg class="a" style="left:1004.0px;top:1043.9px;" width="21.2" height="21.2" viewBox="0 0 21.2 21.2" fill="none"><circle cx="10.6" cy="10.6" r="9.6" stroke="#2b88d8" stroke-width="1.4"/><path d="M10.30 5.32 V11.20 H15.40" stroke="#2b88d8" stroke-width="1.4"/></svg>
<span class="t" style="top:1048.99px;font-size:17.67px;color:#2b88d8;left:1035.00px;letter-spacing:0.040px;">In progr...</span>
<span class="t" style="top:1051.39px;font-size:17.67px;color:#444342;left:1267.00px;letter-spacing:-0.884px;">25%</span>
<span class="t" style="top:1051.39px;font-size:17.67px;color:#444342;left:1353.80px;letter-spacing:-0.884px;">100%</span>
<svg class="a" style="left:1741.75px;top:1050.95px;" width="14.5" height="14.5" viewBox="0 0 14.5 14.5" fill="none"><path d="M0.4 0.4 L14.1 14.1 M14.1 0.4 L0.4 14.1" stroke="#e25a2c" stroke-width="1.25"/></svg>
<div class="a" style="left:1901px;top:662px;width:18px;height:418px;background:#f9f9f9;"></div>
<svg class="a" style="left:1904px;top:673px;" width="13" height="10" viewBox="0 0 13 10" fill="none"><path d="M1.2 9 L6.4 1 L11.8 9 Z" fill="#8a8a8a" stroke="#8a8a8a" stroke-width="1.6" stroke-linejoin="round"/></svg>
<svg class="a" style="left:1904px;top:1061px;" width="13" height="10" viewBox="0 0 13 10" fill="none"><path d="M1.2 1 L6.4 9 L11.8 1 Z" fill="#8a8a8a" stroke="#8a8a8a" stroke-width="1.6" stroke-linejoin="round"/></svg>
<div class="a" style="left:1905px;top:755px;width:11px;height:77.5px;background:#8b8b8b;border-radius:0 0 5.5px 5.5px;"></div>
<div class="a" style="left:1919px;top:63px;width:1px;height:1017px;background:#707070;"></div>
<div class="a" style="left:0px;top:1079px;width:1920px;height:1px;background:#6a6a6a;"></div>
<div class="a" style="left:1818px;top:724.3px;width:100px;height:28.7px;background:#484644;"></div>
<span class="t" style="top:732.08px;font-size:14.61px;color:#fff;left:1827.50px;letter-spacing:-0.140px;">Force retake</span>
<svg class="a" style="left:1801.5px;top:708.3px;" width="21.5" height="28.5" viewBox="0 0 19 27" fill="none"><path d="M6.2 1.2 C7.6 0.4 9 1.2 9 2.8 V10.2 C9.2 9 11.6 8.8 12 10.6 C12.4 9.4 14.8 9.6 15 11.4 C15.6 10.4 17.8 10.8 17.8 12.8 V18.5 C17.8 22 16.5 23.5 15.8 25.8 H7.8 C6.5 22.8 3.2 19.5 1.5 16.8 C0.5 15 2.5 13.6 4 15 L5.8 17 V2.8 C5.8 2 5.9 1.5 6.2 1.2 Z" fill="#fff" stroke="#222" stroke-width="1.1" stroke-linejoin="round"/><path d="M9 10 V14.5 M12 10.8 V14.5 M15 11.6 V14.5" stroke="#222" stroke-width="0.9"/></svg>
<div class="a" style="left:0px;top:0px;width:1920px;height:63px;background:#000;"></div>
<div class="a" style="left:1px;top:0px;width:64px;height:63px;background:#0078d4;border-radius:2px 2px 2px 2px;"></div>
<svg class="a" style="left:0px;top:0px;" width="65" height="63" viewBox="0 0 65 63" fill="none"><rect x="22.0" y="23.0" width="5" height="5" fill="#fff"/><rect x="29.7" y="23.0" width="5" height="5" fill="#fff"/><rect x="37.4" y="23.0" width="5" height="5" fill="#fff"/><rect x="22.0" y="30.7" width="5" height="5" fill="#fff"/><rect x="29.7" y="30.7" width="5" height="5" fill="#fff"/><rect x="37.4" y="30.7" width="5" height="5" fill="#fff"/><rect x="22.0" y="38.4" width="5" height="5" fill="#fff"/><rect x="29.7" y="38.4" width="5" height="5" fill="#fff"/><rect x="37.4" y="38.4" width="5" height="5" fill="#fff"/></svg>
<span class="t" style="top:21.87px;font-size:21.01px;color:#fff;left:90.50px;letter-spacing:0.157px;">Microsoft 365</span>
<div class="a" style="left:244px;top:5px;width:1px;height:53px;background:#4a4a4a;"></div>
<span class="t" style="top:21.87px;font-size:21.01px;color:#fff;left:271.00px;letter-spacing:-0.093px;">Learn365 Admin Center</span>
<div class="a" style="left:516px;top:0px;width:1px;height:63px;background:#4a4a4a;"></div>
<span class="t" style="top:23.89px;font-size:17.67px;color:#fff;left:548.00px;letter-spacing:-0.553px;">ACADEMY</span>
<svg class="a" style="left:643px;top:26px;" width="15" height="9" viewBox="0 0 15 9" fill="none"><path d="M0.5 0.8 L7.5 7.8 L14.5 0.8" stroke="#fff" stroke-width="1.6"/></svg>
<div class="a" style="left:1488px;top:0px;width:1px;height:63px;background:#3a3a3a;"></div>
<div class="a" style="left:1553px;top:0px;width:1px;height:63px;background:#3a3a3a;"></div>
<div class="a" style="left:1618px;top:0px;width:1px;height:63px;background:#3a3a3a;"></div>
<div class="a" style="left:1683px;top:0px;width:1px;height:63px;background:#3a3a3a;"></div>
<svg class="a" style="left:1508px;top:19px;" width="27" height="24" viewBox="0 0 27 24" fill="none"><path d="M1.5 1.5 H25.5 V17.5 H9.5 L4.5 22.5 V17.5 H1.5 Z" stroke="#fff" stroke-width="2" stroke-linejoin="miter"/></svg>
<svg class="a" style="left:1577px;top:19px;" width="19" height="23" viewBox="0 0 19 23" fill="none"><path d="M3 17.5 V9 A6.5 6.5 0 0 1 16 9 V17.5 M0.5 17.5 H18.5 M7 19 A2.6 2.6 0 0 0 12 19" stroke="#fff" stroke-width="1.8"/></svg>
<svg class="a" style="left:1638px;top:19px;" width="27" height="24" viewBox="0 0 27 24" fill="none"><path d="M22 6 V1.5 H1.5 V15.5 H4.5 V20 L8.5 15.5 H10" stroke="#fff" stroke-width="2"/><path d="M10.5 8.5 H25.5 V18.5 H22.5 V22.5 L18.5 18.5 H10.5 Z" stroke="#fff" stroke-width="2"/></svg>
<div class="a" style="left:1709px;top:5px;width:50px;height:50px;background:#5c2e91;border-radius:50%;"></div>
<span class="t" style="top:22.08px;font-size:19.58px;color:#fff;left:1722.50px;-webkit-text-stroke:0.8px #fff;letter-spacing:-0.175px;">AV</span>
<span class="t" style="top:22.08px;font-size:19.58px;color:#fff;left:1772.50px;letter-spacing:-0.204px;">Adele Vance</span>
</body></html>
